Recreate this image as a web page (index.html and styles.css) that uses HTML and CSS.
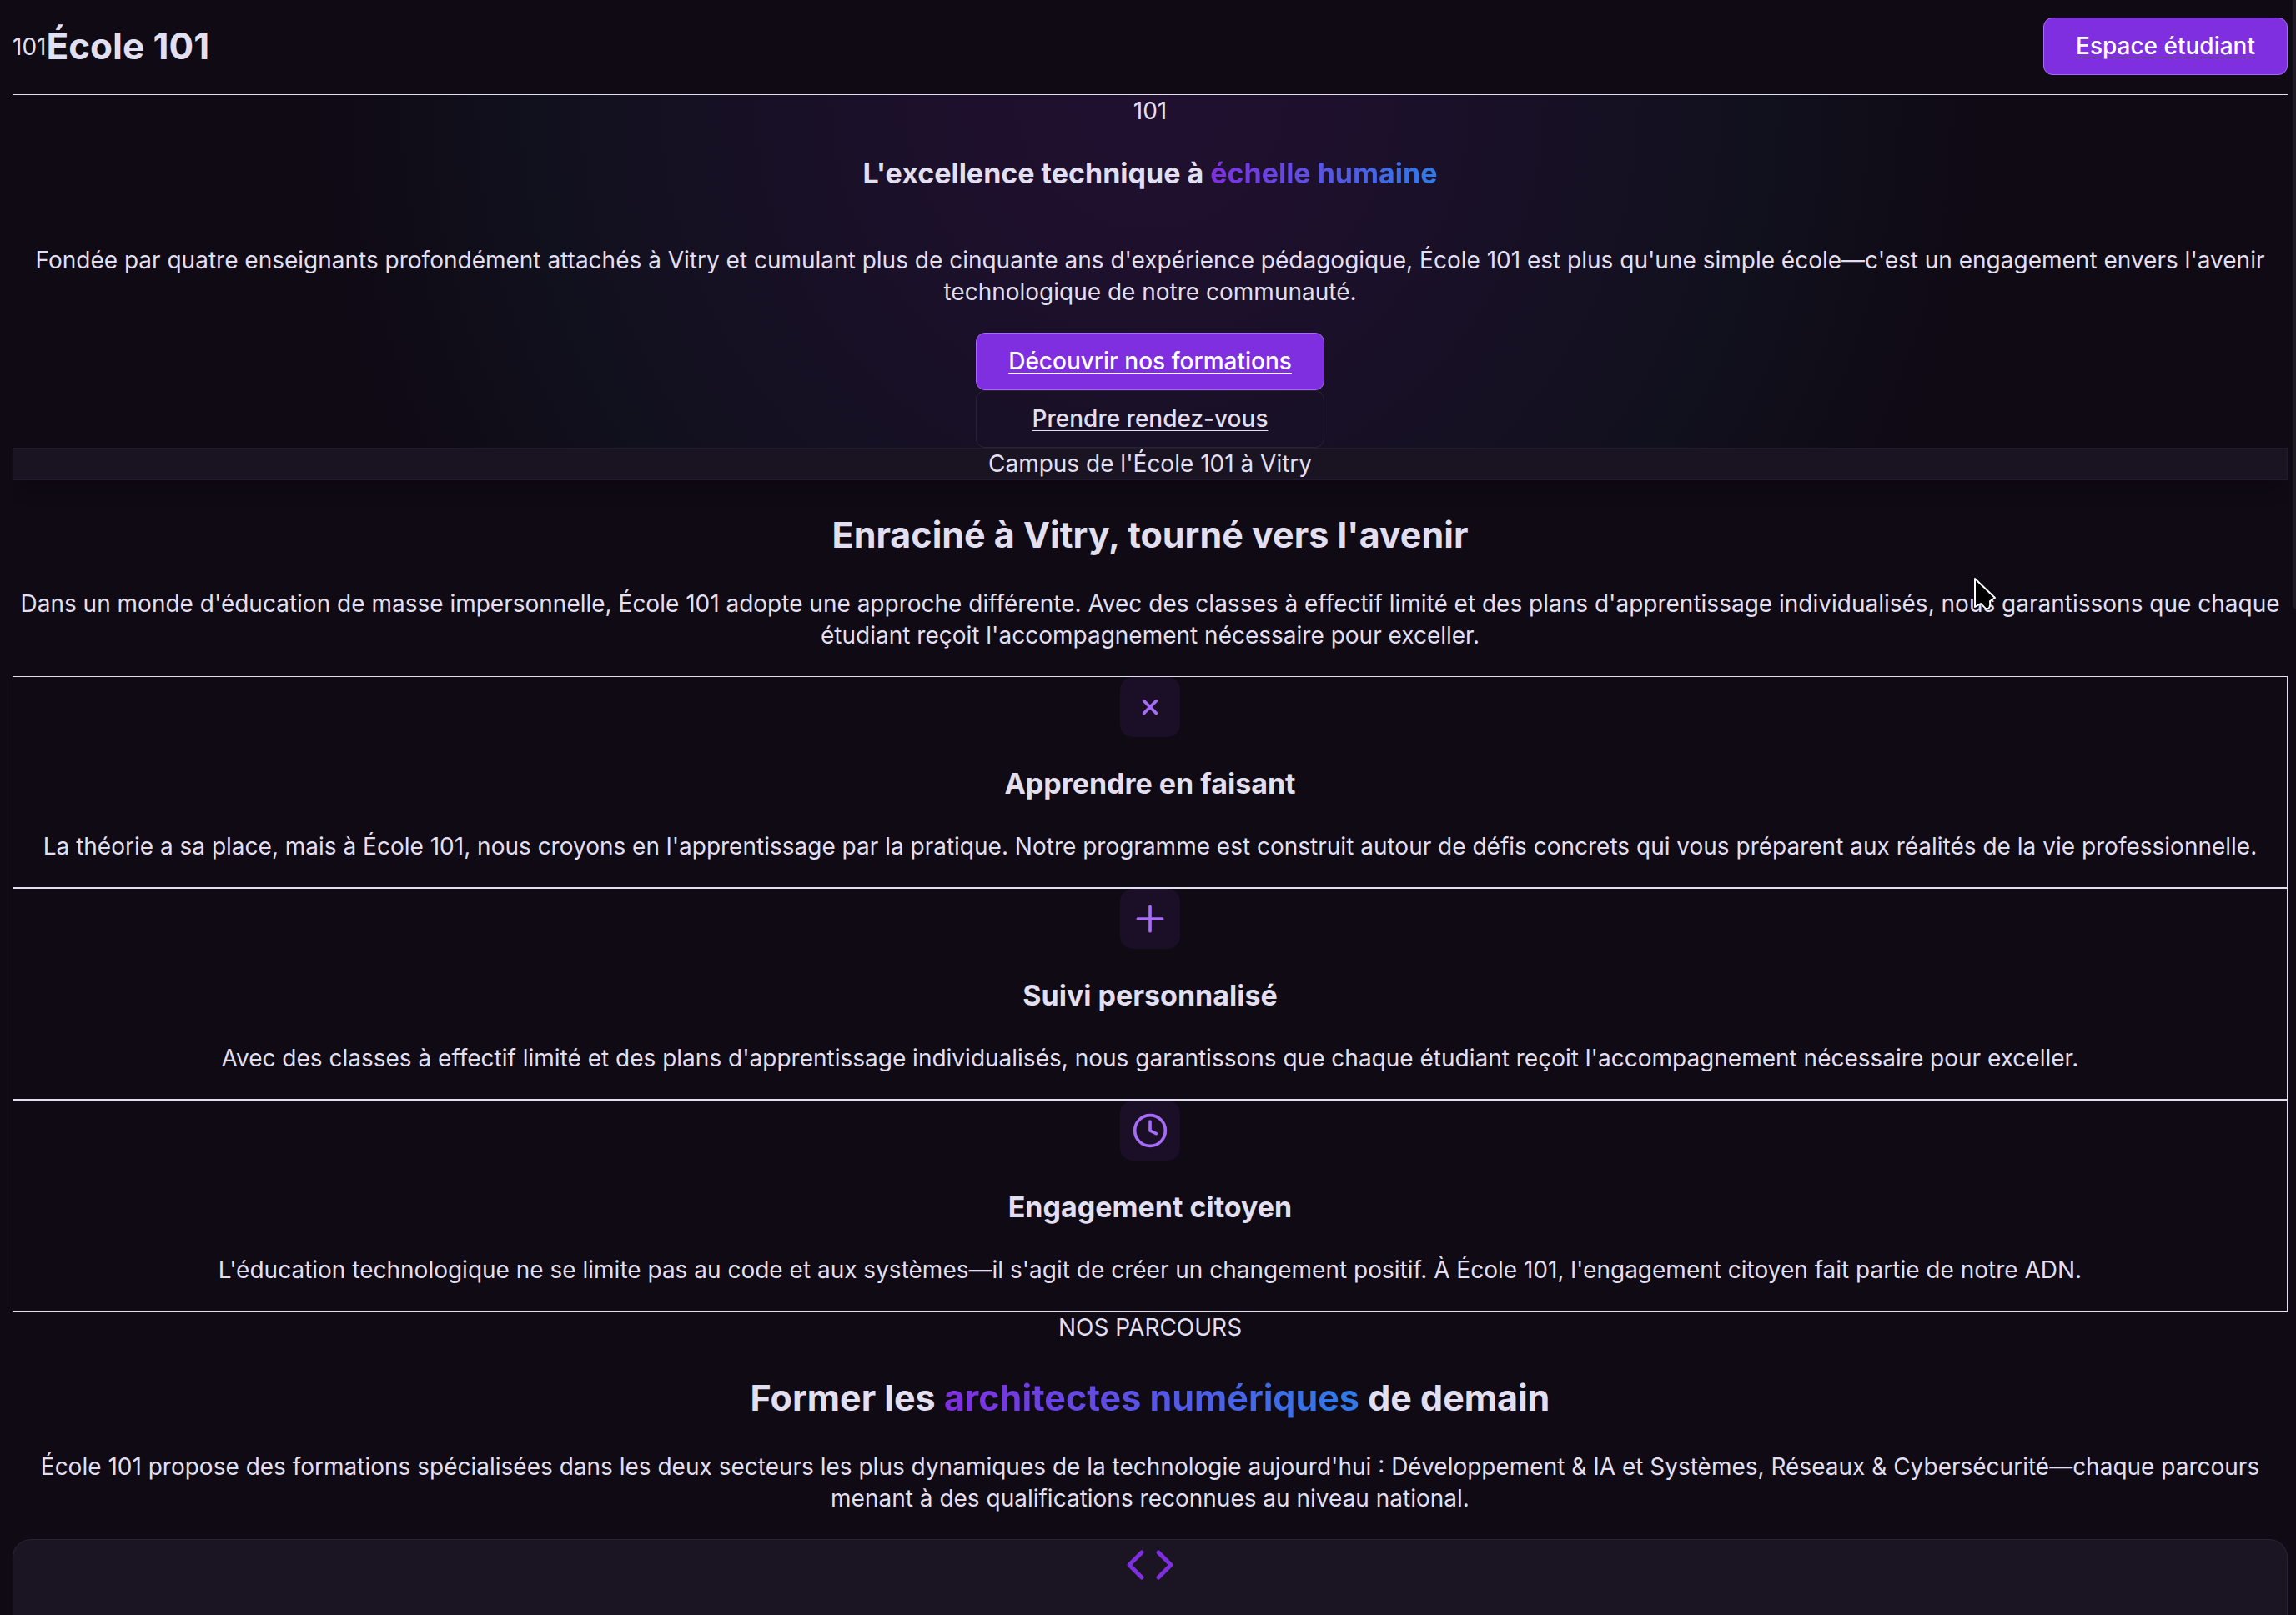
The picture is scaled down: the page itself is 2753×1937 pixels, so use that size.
FILE: index.html
```html
<!DOCTYPE html>
<html lang="fr">
<head>
<meta charset="utf-8">
<meta name="viewport" content="width=device-width, initial-scale=1">
<title>École 101</title>
<link rel="stylesheet" href="styles.css">
</head>
<body>
<header class="site-header">
  <div class="brand"><span>101</span><strong class="brand-name">École 101</strong></div>
  <a class="btn btn-primary" href="#espace">Espace étudiant</a>
</header>
<main class="page">
  <section class="hero">
    <span>101</span>
    <h1 class="hero-title">L'excellence technique à <span class="gradient">échelle humaine</span></h1>
    <p class="text">Fondée par quatre enseignants profondément attachés à Vitry et cumulant plus de cinquante ans d'expérience pédagogique, École 101 est plus qu'une simple école—c'est un engagement envers l'avenir technologique de notre communauté.</p>
    <div class="actions">
      <a class="btn btn-primary" href="#formations">Découvrir nos formations</a>
      <a class="btn btn-outline" href="#rendez-vous">Prendre rendez-vous</a>
    </div>
    <div class="campus">Campus de l'École 101 à Vitry</div>
  </section>

  <section class="section">
    <h2 class="section-title">Enraciné à Vitry, tourné vers l'avenir</h2>
    <p class="text">Dans un monde d'éducation de masse impersonnelle, École 101 adopte une approche différente. Avec des classes à effectif limité et des plans d'apprentissage individualisés, nous garantissons que chaque étudiant reçoit l'accompagnement nécessaire pour exceller.</p>
    <article class="feature">
      <div class="feature-icon"><svg class="icon" viewBox="0 0 24 24" aria-hidden="true"><path d="M8 8l8 8M16 8l-8 8"/></svg></div>
      <h3 class="feature-title">Apprendre en faisant</h3>
      <p class="text">La théorie a sa place, mais à École 101, nous croyons en l'apprentissage par la pratique. Notre programme est construit autour de défis concrets qui vous préparent aux réalités de la vie professionnelle.</p>
    </article>
    <article class="feature">
      <div class="feature-icon"><svg class="icon" viewBox="0 0 24 24" aria-hidden="true"><path d="M12 4v16M20 12H4"/></svg></div>
      <h3 class="feature-title">Suivi personnalisé</h3>
      <p class="text">Avec des classes à effectif limité et des plans d'apprentissage individualisés, nous garantissons que chaque étudiant reçoit l'accompagnement nécessaire pour exceller.</p>
    </article>
    <article class="feature">
      <div class="feature-icon"><svg class="icon" viewBox="0 0 24 24" aria-hidden="true"><circle cx="12" cy="12" r="10"/><path d="M12 6v6l4 2"/></svg></div>
      <h3 class="feature-title">Engagement citoyen</h3>
      <p class="text">L'éducation technologique ne se limite pas au code et aux systèmes—il s'agit de créer un changement positif. À École 101, l'engagement citoyen fait partie de notre ADN.</p>
    </article>
  </section>

  <section class="section section-fill" id="formations">
    <span>NOS PARCOURS</span>
    <h2 class="section-title">Former les <span class="gradient">architectes numériques</span> de demain</h2>
    <p class="text">École 101 propose des formations spécialisées dans les deux secteurs les plus dynamiques de la technologie aujourd'hui : Développement &amp; IA et Systèmes, Réseaux &amp; Cybersécurité—chaque parcours menant à des qualifications reconnues au niveau national.</p>
    <article class="course">
      <svg class="course-icon" viewBox="0 0 24 24" aria-hidden="true"><path d="M16 18l6-6-6-6M8 6l-6 6 6 6"/></svg>
    </article>
  </section>
</main>
<div class="scroll-thumb"></div>
<svg class="pointer" viewBox="0 0 28 42" aria-hidden="true"><path d="M2 2L26 25L20 29Q21 36 18 38Q15 39 12 35L9 32L2 36Z"/></svg>
</body>
</html>
```
FILE: styles.css
```css
* {
  box-sizing: border-box;
}

html {
  background: #0f0a14;
}

body {
  display: flex;
  flex-direction: column;
  min-height: 100vh;
  margin: 0 10px 0 15px;
  background: #0f0a14;
  color: #e2dff0;
  font-family: Inter, "Liberation Sans", sans-serif;
  font-size: 28px;
  line-height: 38px;
}

.site-header {
  display: flex;
  align-items: center;
  justify-content: space-between;
  padding: 21px 0 23px;
  border-bottom: 1px solid #e2dff0;
}

.brand {
  display: flex;
  align-items: center;
}

.brand-name {
  font-size: 44px;
  font-weight: 700;
  line-height: 57px;
}

.page {
  display: flex;
  flex: 1;
  flex-direction: column;
}

.btn {
  display: block;
  padding: 15px 38px;
  border: 1px solid;
  border-radius: 11px;
  font-weight: 500;
  line-height: 37px;
  text-align: center;
  text-decoration-thickness: 1px;
  text-underline-offset: 4px;
}

.btn-primary {
  background: #7f2fe0;
  border-color: #a66cf5;
  color: #fff;
}

.btn-outline {
  border-color: #2a2338;
  color: #e2dff0;
}

.hero,
.section {
  display: flex;
  flex-direction: column;
  align-items: center;
  text-align: center;
}

.section-fill {
  flex: 1;
}

.hero {
  background: radial-gradient(circle 1000px at 50% 0, #211030 0%, #1d102c 24%, #171025 48%, #11101d 74%, #0f0a14 100%);
}

.hero-title {
  margin: 34px 0;
  font-size: 34px;
  line-height: 44px;
}

.gradient {
  background: linear-gradient(90deg, #7f2fe0, #2f7be8);
  -webkit-background-clip: text;
  background-clip: text;
  color: transparent;
}

.text {
  margin: 0 0 30px;
}

.hero .text {
  margin-top: 29px;
}

.actions {
  display: grid;
}

.campus {
  align-self: stretch;
  border: 1px solid #231c30;
  background: #1a1422;
  box-shadow: 0 20px 20px -8px rgba(0, 0, 0, 0.2);
  line-height: 37px;
}

.section-title {
  margin: 37px 0 35px;
  font-size: 43px;
  line-height: 57px;
}

.feature {
  display: flex;
  flex-direction: column;
  align-self: stretch;
  align-items: center;
  border: 1px solid #e2dff0;
}

.feature-icon {
  display: grid;
  place-items: center;
  width: 72px;
  height: 72px;
  border-radius: 15px;
  background: #1b0e27;
}

.icon,
.course-icon,
.pointer {
  fill: none;
  stroke: #a66cf5;
  stroke-width: 2;
  stroke-linecap: round;
  stroke-linejoin: round;
}

.icon {
  width: 44px;
  height: 44px;
}

.feature-title {
  margin: 34px 0;
  font-size: 34px;
  line-height: 44px;
}

.course {
  flex: 1;
  align-self: stretch;
  border: 1px solid #2a2338;
  border-bottom: 0;
  border-radius: 22px 22px 0 0;
  background: #1b1423;
}

.course-icon {
  display: block;
  width: 60px;
  height: 60px;
  margin: 0 auto;
  stroke: #7f2fe0;
}

.scroll-thumb {
  position: fixed;
  top: 0;
  right: 0;
  width: 4px;
  height: 730px;
  border-radius: 0 0 0 4px;
  background: #1f1924;
}

.pointer {
  position: fixed;
  top: 692px;
  left: 2366px;
  width: 28px;
  height: 42px;
  fill: #000;
  stroke: #fff;
}
```
